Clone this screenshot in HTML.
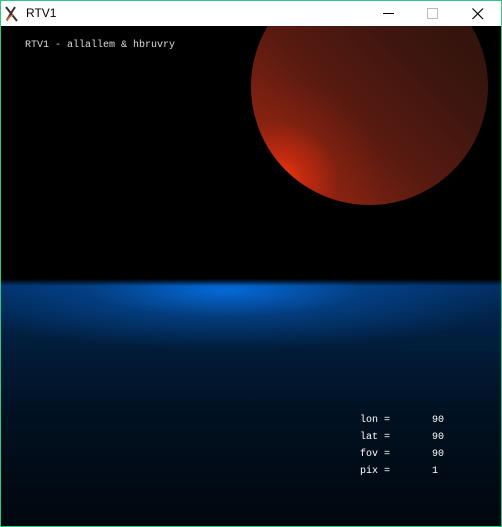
<!DOCTYPE html>
<html><head><style>
*{margin:0;padding:0}
body{width:502px;height:527px;overflow:hidden;background:#2dc983;position:relative;font-family:"Liberation Mono",monospace}
#tb{position:absolute;left:1px;top:1px;width:500px;height:25px;background:#fff}
#c{position:absolute;left:1px;top:26px;width:500px;height:500px;background:#000;overflow:hidden}
#sph{position:absolute;left:250px;top:-58px;width:237px;height:237px;border-radius:50%;
background:radial-gradient(circle at 12% 90%,rgba(255,60,20,1) 0%,rgba(220,45,15,.7) 8%,rgba(150,35,15,.3) 20%,rgba(0,0,0,0) 35%),linear-gradient(45deg,#8a2412 15%,#5a1a10 40%,#3e160f 65%,#2a110d 100%)}
#pl{position:absolute;left:0;top:250px;width:500px;height:250px;
background:linear-gradient(#000 0px,#000 3px,transparent 10px),
radial-gradient(ellipse 300px 60px at 225px 14px,rgba(5,105,215,1) 0%,rgba(4,80,165,.55) 45%,rgba(0,0,0,0) 100%),
linear-gradient(#03306a 0px,#022650 25px,#021a36 80px,#010f1e 150px,#01070e 250px)}
.t{position:absolute;color:#ddd;font-size:10px;white-space:pre}
</style></head><body>
<div id="tb">
<svg style="position:absolute;left:3px;top:4px" width="16" height="18" viewBox="0 0 16 18"><path d="M2 2 L13 16 M11 2 Q7 8 3 15" stroke="#333" stroke-width="2" fill="none"/><path d="M3 16 Q5 11 9 10" stroke="#e06030" stroke-width="1.5" fill="none"/></svg>
<div style="position:absolute;left:25px;top:5px;font:12px 'Liberation Sans',sans-serif;color:#000">RTV1</div>
<div style="position:absolute;left:382px;top:12px;width:11px;height:1px;background:#000"></div>
<div style="position:absolute;left:426px;top:7px;width:9px;height:9px;border:1px solid #bbb"></div>
<svg style="position:absolute;left:471px;top:7px" width="12" height="12"><path d="M0.5 0.5L11 11M11 0.5L0.5 11" stroke="#000" stroke-width="1.2"/></svg>
</div>
<div id="c">
<div id="sph"></div>
<div id="pl"></div>
<div class="t" style="left:24px;top:14px">RTV1 - allallem &amp; hbruvry</div>
<div class="t" style="left:359px;top:389px;color:#fff">lon =       90</div>
<div class="t" style="left:359px;top:406px;color:#fff">lat =       90</div>
<div class="t" style="left:359px;top:423px;color:#fff">fov =       90</div>
<div class="t" style="left:359px;top:440px;color:#fff">pix =       1</div>
</div>
</body></html>
